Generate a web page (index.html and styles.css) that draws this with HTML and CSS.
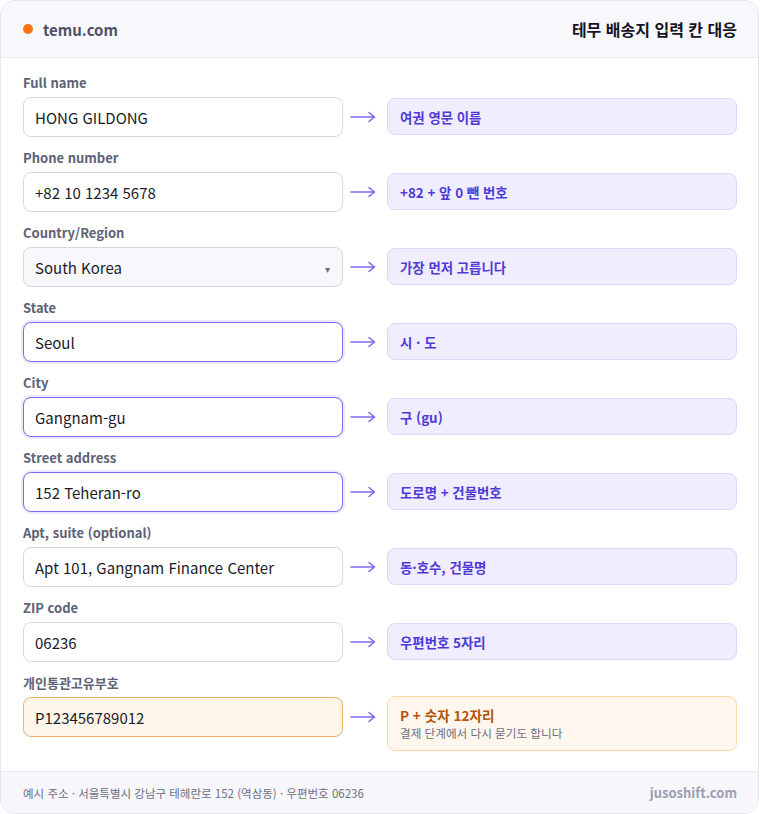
FILE: index.html
```html
<!DOCTYPE html>
<html lang="ko">
<head>
<meta charset="utf-8">
<title>테무 배송지 입력 칸 대응</title>
<link rel="stylesheet" href="styles.css">
</head>
<body>
<div class="card">
  <header class="head">
    <div class="brand"><span class="dot"></span><span>temu.com</span></div>
    <h1 class="title">테무 배송지 입력 칸 대응</h1>
  </header>
  <main class="form">
    <div class="row">
      <div class="label">Full name</div>
      <div class="field">HONG GILDONG</div>
      <svg class="arrow" viewBox="0 0 26 12" width="26" height="12"><path d="M1 6H24.5M19 1.5L24.5 6L19 10.5"/></svg>
      <div class="tip">여권 영문 이름</div>
    </div>
    <div class="row">
      <div class="label">Phone number</div>
      <div class="field">+82 10 1234 5678</div>
      <svg class="arrow" viewBox="0 0 26 12" width="26" height="12"><path d="M1 6H24.5M19 1.5L24.5 6L19 10.5"/></svg>
      <div class="tip">+82 + 앞 0 뺀 번호</div>
    </div>
    <div class="row">
      <div class="label">Country/Region</div>
      <div class="field field-select"><span>South Korea</span><span class="caret">▾</span></div>
      <svg class="arrow" viewBox="0 0 26 12" width="26" height="12"><path d="M1 6H24.5M19 1.5L24.5 6L19 10.5"/></svg>
      <div class="tip">가장 먼저 고릅니다</div>
    </div>
    <div class="row">
      <div class="label">State</div>
      <div class="field field-focus">Seoul</div>
      <svg class="arrow" viewBox="0 0 26 12" width="26" height="12"><path d="M1 6H24.5M19 1.5L24.5 6L19 10.5"/></svg>
      <div class="tip">시 · 도</div>
    </div>
    <div class="row">
      <div class="label">City</div>
      <div class="field field-focus">Gangnam-gu</div>
      <svg class="arrow" viewBox="0 0 26 12" width="26" height="12"><path d="M1 6H24.5M19 1.5L24.5 6L19 10.5"/></svg>
      <div class="tip">구 (gu)</div>
    </div>
    <div class="row">
      <div class="label">Street address</div>
      <div class="field field-focus">152 Teheran-ro</div>
      <svg class="arrow" viewBox="0 0 26 12" width="26" height="12"><path d="M1 6H24.5M19 1.5L24.5 6L19 10.5"/></svg>
      <div class="tip">도로명 + 건물번호</div>
    </div>
    <div class="row">
      <div class="label">Apt, suite (optional)</div>
      <div class="field">Apt 101, Gangnam Finance Center</div>
      <svg class="arrow" viewBox="0 0 26 12" width="26" height="12"><path d="M1 6H24.5M19 1.5L24.5 6L19 10.5"/></svg>
      <div class="tip">동·호수, 건물명</div>
    </div>
    <div class="row">
      <div class="label">ZIP code</div>
      <div class="field">06236</div>
      <svg class="arrow" viewBox="0 0 26 12" width="26" height="12"><path d="M1 6H24.5M19 1.5L24.5 6L19 10.5"/></svg>
      <div class="tip">우편번호 5자리</div>
    </div>
    <div class="row">
      <div class="label">개인통관고유부호</div>
      <div class="field field-warn">P123456789012</div>
      <svg class="arrow" viewBox="0 0 26 12" width="26" height="12"><path d="M1 6H24.5M19 1.5L24.5 6L19 10.5"/></svg>
      <div class="tip tip-warn">
        <div class="tip-title">P + 숫자 12자리</div>
        <div class="tip-sub">결제 단계에서 다시 묻기도 합니다</div>
      </div>
    </div>
  </main>
  <footer class="foot">
    <span>예시 주소 · 서울특별시 강남구 테헤란로 152 (역삼동) · 우편번호 06236</span>
    <span class="foot-brand">jusoshift.com</span>
  </footer>
</div>
</body>
</html>
```

FILE: styles.css
```css
* { box-sizing: border-box; }
html, body { margin: 0; padding: 0; background: #ffffff; }
body {
  font-family: "Noto Sans CJK KR", "Noto Sans", sans-serif;
  color: #1b1c29;
}
.card {
  width: 759px;
  height: 814px;
  border: 1px solid #e6e6ee;
  border-radius: 14px;
  overflow: hidden;
  background: #ffffff;
  display: flex;
  flex-direction: column;
}
.head {
  height: 57px;
  flex: none;
  background: #f8f8fc;
  border-bottom: 1px solid #ebebf2;
  display: flex;
  align-items: center;
  justify-content: space-between;
  padding: 0 21px 0 22px;
}
.brand {
  display: flex;
  align-items: center;
  gap: 10px;
  font-size: 15px;
  font-weight: 700;
  color: #4d5163;
}
.dot {
  width: 10px;
  height: 10px;
  border-radius: 50%;
  background: #f97316;
}
.title {
  margin: 0;
  font-size: 16px;
  font-weight: 700;
  color: #14151f;
}
.form {
  flex: 1;
  padding: 16px 21px 20px 22px;
  display: flex;
  flex-direction: column;
  gap: 12px;
}
.row {
  display: grid;
  grid-template-columns: 320px 44px 350px;
  grid-template-rows: 18px auto;
  row-gap: 5px;
}
.label {
  grid-column: 1 / -1;
  font-size: 13px;
  font-weight: 700;
  line-height: 18px;
  color: #5d6276;
}
.field {
  grid-column: 1;
  height: 40px;
  border: 1px solid #d8d8e2;
  border-radius: 8px;
  background: #ffffff;
  padding: 0 11px;
  display: flex;
  align-items: center;
  font-size: 15px;
  color: #1a1b28;
  white-space: nowrap;
}
.field-select {
  background: #f8f8fc;
  justify-content: space-between;
}
.caret {
  font-size: 10px;
  color: #6a6e80;
  margin-top: 2px;
  margin-right: 1px;
}
.field-focus {
  border-color: #7b6cf0;
  box-shadow: 0 0 0 2px #ebe8fd;
}
.field-warn {
  background: #fff6eb;
  border-color: #f2b06a;
}
.arrow {
  grid-column: 2;
  align-self: start;
  margin: 14px 0 0 7px;
  fill: none;
  stroke: #7b6cf0;
  stroke-width: 1.6;
  stroke-linecap: round;
  stroke-linejoin: round;
}
.tip {
  grid-column: 3;
  align-self: start;
  margin-top: 1px;
  height: 37px;
  border: 1px solid #dcd6fc;
  border-radius: 8px;
  background: #f0edff;
  padding: 0 12px;
  display: flex;
  align-items: center;
  font-size: 13.4px;
  font-weight: 700;
  color: #4f3ad6;
}
.tip-warn {
  margin-top: -1px;
  height: 55px;
  flex-direction: column;
  align-items: flex-start;
  justify-content: center;
  background: #fff7ed;
  border-color: #fdd9a8;
}
.tip-title {
  font-size: 13.6px;
  font-weight: 700;
  line-height: 20px;
  color: #b45309;
}
.tip-sub {
  font-size: 11.6px;
  font-weight: 400;
  line-height: 17px;
  color: #6b6f80;
}
.foot {
  height: 42px;
  flex: none;
  border-top: 1px solid #ebebf2;
  background: #f7f7fb;
  display: flex;
  align-items: center;
  justify-content: space-between;
  padding: 0 21px 0 22px;
  font-size: 11.5px;
  color: #6b7080;
}
.foot-brand {
  font-size: 13px;
  font-weight: 700;
  color: #9aa0b1;
}
```
